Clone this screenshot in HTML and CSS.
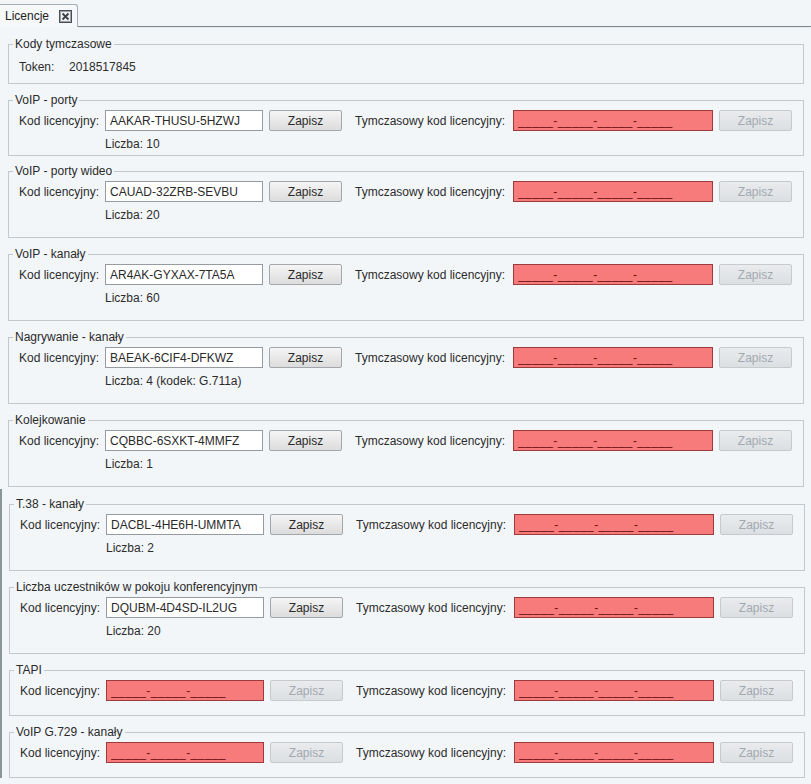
FILE: index.html
```html
<!DOCTYPE html>
<html lang="pl">
<head>
<meta charset="utf-8">
<title>Licencje</title>
<link rel="stylesheet" href="styles.css">
</head>
<body>
<div class="tabbar">
  <div class="tab">
    <span class="tab-label">Licencje</span>
    <svg class="tab-close" width="13" height="13" viewBox="0 0 13 13">
      <rect x="0.5" y="0.5" width="12" height="12" fill="#d9dcdf" stroke="#4a4f55"/>
      <rect x="1.5" y="1.5" width="10" height="10" fill="#eef0f2" stroke="#9aa0a6"/>
      <path d="M3.5 3.5 L9.5 9.5 M9.5 3.5 L3.5 9.5" stroke="#3c4046" stroke-width="1.8"/>
    </svg>
  </div>
  <div class="tab-fill"></div>
</div>

<main class="panel">
  <div class="upper">
    <fieldset class="group group-token">
      <legend>Kody tymczasowe</legend>
      <div class="token-row"><span class="token-label">Token:</span><span>2018517845</span></div>
    </fieldset>

    <fieldset class="group group-compact">
      <legend>VoIP - porty</legend>
      <div class="row">
        <span class="lbl">Kod licencyjny:</span>
        <input class="field" type="text" readonly value="AAKAR-THUSU-5HZWJ">
        <button class="btn">Zapisz</button>
        <span class="lbl-temp">Tymczasowy kod licencyjny:</span>
        <input class="field field-temp field-empty" type="text" readonly value="_____-_____-_____-_____">
        <button class="btn" disabled>Zapisz</button>
      </div>
      <div class="count">Liczba: 10</div>
    </fieldset>

    <fieldset class="group group-after-compact">
      <legend>VoIP - porty wideo</legend>
      <div class="row">
        <span class="lbl">Kod licencyjny:</span>
        <input class="field" type="text" readonly value="CAUAD-32ZRB-SEVBU">
        <button class="btn">Zapisz</button>
        <span class="lbl-temp">Tymczasowy kod licencyjny:</span>
        <input class="field field-temp field-empty" type="text" readonly value="_____-_____-_____-_____">
        <button class="btn" disabled>Zapisz</button>
      </div>
      <div class="count">Liczba: 20</div>
    </fieldset>

    <fieldset class="group">
      <legend>VoIP - kanały</legend>
      <div class="row">
        <span class="lbl">Kod licencyjny:</span>
        <input class="field" type="text" readonly value="AR4AK-GYXAX-7TA5A">
        <button class="btn">Zapisz</button>
        <span class="lbl-temp">Tymczasowy kod licencyjny:</span>
        <input class="field field-temp field-empty" type="text" readonly value="_____-_____-_____-_____">
        <button class="btn" disabled>Zapisz</button>
      </div>
      <div class="count">Liczba: 60</div>
    </fieldset>

    <fieldset class="group">
      <legend>Nagrywanie - kanały</legend>
      <div class="row">
        <span class="lbl">Kod licencyjny:</span>
        <input class="field" type="text" readonly value="BAEAK-6CIF4-DFKWZ">
        <button class="btn">Zapisz</button>
        <span class="lbl-temp">Tymczasowy kod licencyjny:</span>
        <input class="field field-temp field-empty" type="text" readonly value="_____-_____-_____-_____">
        <button class="btn" disabled>Zapisz</button>
      </div>
      <div class="count">Liczba: 4 (kodek: G.711a)</div>
    </fieldset>

    <fieldset class="group">
      <legend>Kolejkowanie</legend>
      <div class="row">
        <span class="lbl">Kod licencyjny:</span>
        <input class="field" type="text" readonly value="CQBBC-6SXKT-4MMFZ">
        <button class="btn">Zapisz</button>
        <span class="lbl-temp">Tymczasowy kod licencyjny:</span>
        <input class="field field-temp field-empty" type="text" readonly value="_____-_____-_____-_____">
        <button class="btn" disabled>Zapisz</button>
      </div>
      <div class="count">Liczba: 1</div>
    </fieldset>
  </div>

  <div class="lower">
    <fieldset class="group">
      <legend>T.38 - kanały</legend>
      <div class="row">
        <span class="lbl">Kod licencyjny:</span>
        <input class="field" type="text" readonly value="DACBL-4HE6H-UMMTA">
        <button class="btn">Zapisz</button>
        <span class="lbl-temp">Tymczasowy kod licencyjny:</span>
        <input class="field field-temp field-empty" type="text" readonly value="_____-_____-_____-_____">
        <button class="btn" disabled>Zapisz</button>
      </div>
      <div class="count">Liczba: 2</div>
    </fieldset>

    <fieldset class="group">
      <legend>Liczba uczestników w pokoju konferencyjnym</legend>
      <div class="row">
        <span class="lbl">Kod licencyjny:</span>
        <input class="field" type="text" readonly value="DQUBM-4D4SD-IL2UG">
        <button class="btn">Zapisz</button>
        <span class="lbl-temp">Tymczasowy kod licencyjny:</span>
        <input class="field field-temp field-empty" type="text" readonly value="_____-_____-_____-_____">
        <button class="btn" disabled>Zapisz</button>
      </div>
      <div class="count">Liczba: 20</div>
    </fieldset>

    <fieldset class="group group-nocount">
      <legend>TAPI</legend>
      <div class="row">
        <span class="lbl">Kod licencyjny:</span>
        <input class="field field-empty" type="text" readonly value="_____-_____-_____">
        <button class="btn" disabled>Zapisz</button>
        <span class="lbl-temp">Tymczasowy kod licencyjny:</span>
        <input class="field field-temp field-empty" type="text" readonly value="_____-_____-_____-_____">
        <button class="btn" disabled>Zapisz</button>
      </div>
    </fieldset>

    <fieldset class="group group-nocount">
      <legend>VoIP G.729 - kanały</legend>
      <div class="row">
        <span class="lbl">Kod licencyjny:</span>
        <input class="field field-empty" type="text" readonly value="_____-_____-_____">
        <button class="btn" disabled>Zapisz</button>
        <span class="lbl-temp">Tymczasowy kod licencyjny:</span>
        <input class="field field-temp field-empty" type="text" readonly value="_____-_____-_____-_____">
        <button class="btn" disabled>Zapisz</button>
      </div>
    </fieldset>
  </div>
</main>
</body>
</html>
```

FILE: styles.css
```css
* { box-sizing: border-box; }

html, body {
  margin: 0;
  padding: 0;
  background: #f3f6f9;
}

body {
  width: 811px;
  height: 784px;
  overflow: hidden;
  font-family: "Liberation Sans", Arial, sans-serif;
  font-size: 12px;
  line-height: 14px;
  color: #2c2c2c;
}

/* ---------- tab bar ---------- */
.tabbar {
  display: flex;
  height: 27px;
}

.tab {
  display: flex;
  align-items: center;
  width: 78px;
  height: 23px;
  margin-top: 4px;
  padding: 0 5px;
  border: 1px solid #a4adb6;
  border-left: none;
  border-bottom: none;
  border-radius: 0 3px 0 0;
  background: #f6f8fa;
}

.tab-label {
  font-size: 12px;
  color: #222;
}

.tab-close {
  margin-left: auto;
  margin-right: 0;
  display: block;
}

.tab-fill {
  flex: 1;
  border-bottom: 1px solid #7e8891;
  box-shadow: 0 2px 0 -1px #e4e9ee;
}

/* ---------- panel ---------- */
.panel {
  display: flex;
  flex-direction: column;
}

.upper {
  padding: 10px 7px 0 8px;
}

.lower {
  margin-top: 2px;
  padding: 8px 6px 0 7px;
  border-left: 2px solid #8c949b;
  flex: 1;
}

/* ---------- group boxes ---------- */
.group {
  margin: 9px 0 0 0;
  padding: 3px 4px 15px 4px;
  min-width: 0;
  border: 1px solid #c3c8cd;
  border-radius: 0;
}

.group:first-child {
  margin-top: 0;
}

.group legend {
  padding: 0 2px;
  line-height: 14px;
  color: #2a2a2a;
}

.group-token {
  padding-top: 9px;
  padding-bottom: 9px;
}

.group-compact {
  padding-bottom: 4px;
}

.group-after-compact {
  margin-top: 8px;
}

.group-nocount {
  padding-bottom: 14px;
}

.token-row {
  display: flex;
  padding-left: 6px;
}

.token-label {
  width: 50px;
}

/* ---------- rows ---------- */
.row {
  display: flex;
  align-items: center;
  height: 21px;
  padding-left: 6px;
}

.lbl {
  width: 86px;
  flex: none;
}

.lbl-temp {
  width: 158px;
  margin-left: 13px;
  flex: none;
}

.field {
  width: 158px;
  height: 21px;
  flex: none;
  margin: 0;
  padding: 0 4px;
  border: 1px solid #959ba1;
  border-radius: 0;
  background: #ffffff;
  font-family: inherit;
  font-size: 12px;
  color: #2a2a2a;
  outline: none;
}

.field-temp {
  width: 200px;
}

.field-empty {
  background: #f77b7b;
  border-color: #9b3b3b;
  color: #6e1212;
  letter-spacing: 0.4px;
}

.btn {
  width: 73px;
  height: 21px;
  flex: none;
  margin: 0 0 0 6px;
  padding: 0;
  border: 1px solid #a3a7ab;
  border-radius: 2px;
  background: linear-gradient(#f5f5f5, #dcdcdc);
  font-family: inherit;
  font-size: 12px;
  color: #2a2a2a;
}

.btn:disabled {
  border-color: #c6cacd;
  background: linear-gradient(#e9ebed, #dcdfe2);
  color: #a2a9b0;
}

.count {
  margin-top: 6px;
  padding-left: 92px;
  line-height: 14px;
}
```
